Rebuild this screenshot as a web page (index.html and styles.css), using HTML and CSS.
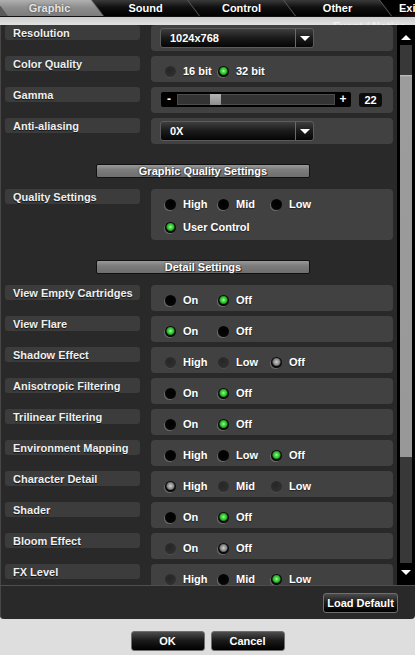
FILE: index.html
```html
<!DOCTYPE html>
<html lang="en">
<head>
    <meta charset="UTF-8">
    <meta name="viewport" content="width=device-width, initial-scale=1.0">
    <title>Options - Graphic</title>
    <link rel="stylesheet" href="styles.css">
</head>
<body>
    <div id="tabs">
        <div class="tab active">Graphic</div>
        <div class="tab">Sound</div>
        <div class="tab">Control</div>
        <div class="tab">Other</div>
        <div class="tab exit">Exit</div>
    </div>
    <div id="strip"><span>Event / Notice</span></div>

    <div id="panel">
        <div id="scroll-area">
            <div id="rows">
                <div class="row">
                    <div class="label">Resolution</div>
                    <div class="value">
                        <div class="dropdown"><span>1024x768</span><div class="drop-btn"><i></i></div></div>
                    </div>
                </div>
                <div class="row">
                    <div class="label">Color Quality</div>
                    <div class="value">
                        <div class="opts">
                            <div class="opt"><span class="radio dim"></span>16 bit</div>
                            <div class="opt"><span class="radio on"></span>32 bit</div>
                        </div>
                    </div>
                </div>
                <div class="row">
                    <div class="label">Gamma</div>
                    <div class="value">
                        <div class="slider">
                            <div class="slider-bar">
                                <span class="sign">-</span>
                                <div class="track"><div class="thumb"></div></div>
                                <span class="sign">+</span>
                            </div>
                            <div class="slider-num">22</div>
                        </div>
                    </div>
                </div>
                <div class="row">
                    <div class="label">Anti-aliasing</div>
                    <div class="value">
                        <div class="dropdown"><span>0X</span><div class="drop-btn"><i></i></div></div>
                    </div>
                </div>

                <div class="section">Graphic Quality Settings</div>

                <div class="row">
                    <div class="label">Quality Settings</div>
                    <div class="value tall">
                        <div class="opts">
                            <div class="opt"><span class="radio"></span>High</div>
                            <div class="opt"><span class="radio"></span>Mid</div>
                            <div class="opt"><span class="radio"></span>Low</div>
                        </div>
                        <div class="opts">
                            <div class="opt wide"><span class="radio on"></span>User Control</div>
                        </div>
                    </div>
                </div>

                <div class="section">Detail Settings</div>

                <div class="row">
                    <div class="label">View Empty Cartridges</div>
                    <div class="value">
                        <div class="opts">
                            <div class="opt"><span class="radio"></span>On</div>
                            <div class="opt"><span class="radio on"></span>Off</div>
                        </div>
                    </div>
                </div>
                <div class="row">
                    <div class="label">View Flare</div>
                    <div class="value">
                        <div class="opts">
                            <div class="opt"><span class="radio on"></span>On</div>
                            <div class="opt"><span class="radio"></span>Off</div>
                        </div>
                    </div>
                </div>
                <div class="row">
                    <div class="label">Shadow Effect</div>
                    <div class="value">
                        <div class="opts">
                            <div class="opt"><span class="radio dim"></span>High</div>
                            <div class="opt"><span class="radio dim"></span>Low</div>
                            <div class="opt"><span class="radio grey"></span>Off</div>
                        </div>
                    </div>
                </div>
                <div class="row">
                    <div class="label">Anisotropic Filtering</div>
                    <div class="value">
                        <div class="opts">
                            <div class="opt"><span class="radio"></span>On</div>
                            <div class="opt"><span class="radio on"></span>Off</div>
                        </div>
                    </div>
                </div>
                <div class="row">
                    <div class="label">Trilinear Filtering</div>
                    <div class="value">
                        <div class="opts">
                            <div class="opt"><span class="radio"></span>On</div>
                            <div class="opt"><span class="radio on"></span>Off</div>
                        </div>
                    </div>
                </div>
                <div class="row">
                    <div class="label">Environment Mapping</div>
                    <div class="value">
                        <div class="opts">
                            <div class="opt"><span class="radio"></span>High</div>
                            <div class="opt"><span class="radio"></span>Low</div>
                            <div class="opt"><span class="radio on"></span>Off</div>
                        </div>
                    </div>
                </div>
                <div class="row">
                    <div class="label">Character Detail</div>
                    <div class="value">
                        <div class="opts">
                            <div class="opt"><span class="radio grey"></span>High</div>
                            <div class="opt"><span class="radio dim"></span>Mid</div>
                            <div class="opt"><span class="radio dim"></span>Low</div>
                        </div>
                    </div>
                </div>
                <div class="row">
                    <div class="label">Shader</div>
                    <div class="value">
                        <div class="opts">
                            <div class="opt"><span class="radio"></span>On</div>
                            <div class="opt"><span class="radio on"></span>Off</div>
                        </div>
                    </div>
                </div>
                <div class="row">
                    <div class="label">Bloom Effect</div>
                    <div class="value">
                        <div class="opts">
                            <div class="opt"><span class="radio dim"></span>On</div>
                            <div class="opt"><span class="radio grey"></span>Off</div>
                        </div>
                    </div>
                </div>
                <div class="row">
                    <div class="label">FX Level</div>
                    <div class="value">
                        <div class="opts">
                            <div class="opt"><span class="radio dim"></span>High</div>
                            <div class="opt"><span class="radio"></span>Mid</div>
                            <div class="opt"><span class="radio on"></span>Low</div>
                        </div>
                    </div>
                </div>
            </div>

            <div id="scrollbar">
                <div class="sb-up"><i></i></div>
                <div class="sb-track"><div class="sb-thumb"></div></div>
                <div class="sb-down"><i></i></div>
            </div>
        </div>

        <div id="panel-bottom">
            <button class="btn" id="btn_loadDefault">Load Default</button>
        </div>
    </div>

    <div id="footer">
        <button class="btn" id="btn_ok">OK</button>
        <button class="btn" id="btn_cancel">Cancel</button>
    </div>
</body>
</html>
```

FILE: styles.css
```css
body {
    margin: 0;
    padding: 0;
    width: 415px;
    height: 655px;
    overflow: hidden;
    background-color: #dedede;
    font-family: "Liberation Sans", Arial, sans-serif;
    font-size: 11px;
    font-weight: bold;
    color: #fff;
}

/* ---- tab bar ---- */

#tabs {
    display: flex;
    height: 16px;
    background-color: #5a5a5a;
    border-bottom: 1px solid #111;
    overflow: hidden;
}

.tab {
    flex: none;
    width: 107px;
    height: 16px;
    margin-right: -11px;
    line-height: 16px;
    text-align: center;
    clip-path: polygon(0 0, 95px 0, 107px 100%, 12px 100%);
    background: linear-gradient(to bottom, #3a3a3a 0, #101010 45%, #000 100%);
    text-shadow: 0 1px 1px #000;
}

.tab:first-child {
    margin-left: -4px;
}

.tab.active {
    background: linear-gradient(to bottom, #b0b0b0 0, #8c8c8c 50%, #7c7c7c 100%);
    color: #e4e4e4;
    text-shadow: 0 0 2px #444;
}

.tab.exit {
    text-align: left;
    padding-left: 19px;
    box-sizing: border-box;
    background: linear-gradient(160deg, #000 35%, #6a0808 70%, #c01818 100%);
}

#strip {
    height: 8px;
    overflow: hidden;
    background: linear-gradient(to bottom, #cdcdcd, #e2e2e2);
    padding-left: 333px;
    line-height: 18px;
    color: #f0f0f0;
}

/* ---- main panel ---- */

#panel {
    height: 594px;
    background-color: #292929;
    border-bottom-left-radius: 4px;
    border-bottom-right-radius: 4px;
    box-shadow: inset 1px 0 0 #474747;
}

#scroll-area {
    display: flex;
    height: 560px;
    overflow: hidden;
}

#rows {
    display: flex;
    flex-direction: column;
    flex: none;
    width: 397px;
    overflow: hidden;
}

.row {
    display: flex;
    flex: none;
    align-items: flex-start;
    margin-bottom: 5px;
}

.label {
    flex: none;
    width: 127px;
    height: 14px;
    margin-left: 5px;
    margin-right: 11px;
    padding-left: 8px;
    padding-top: 1px;
    line-height: 15px;
    background-color: #3c3c3c;
    border-radius: 3px;
    color: #efefef;
    text-shadow: 0 1px 1px #111;
    white-space: nowrap;
    overflow: hidden;
}

.value {
    flex: none;
    box-sizing: border-box;
    width: 242px;
    height: 26px;
    padding-left: 14px;
    padding-top: 4px;
    background-color: #414141;
    border-radius: 4px;
}

.value.tall {
    height: 51px;
}

.value .opts + .opts {
    margin-top: 1px;
}

.opts {
    display: flex;
    align-items: center;
    height: 22px;
}

.opt {
    display: flex;
    align-items: center;
    gap: 7px;
    flex: none;
    width: 53px;
    white-space: nowrap;
    text-shadow: 0 1px 1px #222;
}

.opt.wide {
    width: 120px;
}

/* ---- radio buttons ---- */

.radio {
    flex: none;
    width: 11px;
    height: 11px;
    border-radius: 50%;
    background: radial-gradient(circle at 55% 40%, #000 0, #050505 60%, #1c1c1c 100%);
    box-shadow: -1px 1px 0 #686868;
}

.radio.dim {
    background: radial-gradient(circle at 40% 35%, #262626 0, #2e2e2e 60%, #363636 100%);
    box-shadow: 0 1px 0 #4d4d4d;
}

.radio.on {
    background: radial-gradient(circle at 50% 45%, #b6ffb0 0, #4ee04a 1.5px, #2fbf2d 3px, #1d7a1c 3.8px, #0a0a0a 4.5px);
    box-shadow: -1px 1px 0 #686868;
}

.radio.grey {
    background: radial-gradient(circle at 50% 45%, #d8d8d8 0, #a8a8a8 1.5px, #8a8a8a 3px, #555 3.8px, #0a0a0a 4.5px);
    box-shadow: -1px 1px 0 #686868;
}

/* ---- dropdowns ---- */

.dropdown {
    display: flex;
    align-items: center;
    box-sizing: border-box;
    width: 154px;
    height: 20px;
    margin-left: -5px;
    margin-top: -1px;
    border: 1px solid #5c5c5c;
    border-radius: 3px;
    background: linear-gradient(to bottom, #3e3e3e 0, #1a1a1a 50%, #050505 100%);
}

.dropdown span {
    flex: 1;
    padding-left: 9px;
}

.drop-btn {
    display: flex;
    align-items: center;
    justify-content: center;
    width: 17px;
    height: 18px;
    border-left: 1px solid #6a6a6a;
}

.drop-btn i {
    width: 0;
    height: 0;
    border-left: 5px solid transparent;
    border-right: 5px solid transparent;
    border-top: 5px solid #fff;
}

/* ---- gamma slider ---- */

.slider {
    display: flex;
    align-items: center;
    gap: 8px;
    margin-left: -4px;
    margin-top: 1px;
}

.slider-bar {
    display: flex;
    align-items: center;
    width: 190px;
    height: 15px;
    background-color: #000;
    border-radius: 2px;
}

.sign {
    width: 16px;
    text-align: center;
    font-size: 12px;
    line-height: 15px;
}

.track {
    display: flex;
    align-items: center;
    box-sizing: border-box;
    width: 158px;
    height: 11px;
    background-color: #333;
    border: 1px solid #4c4c4c;
}

.thumb {
    width: 11px;
    height: 11px;
    margin-left: 32px;
    background: linear-gradient(to bottom, #b4b4b4, #8e8e8e);
}

.slider-num {
    width: 23px;
    height: 14px;
    line-height: 14px;
    text-align: center;
    background-color: #0c0c0c;
    border-radius: 3px;
}

/* ---- section headers ---- */

.section {
    flex: none;
    box-sizing: border-box;
    width: 214px;
    height: 14px;
    margin: 15px 0 11px 96px;
    line-height: 12px;
    text-align: center;
    background: linear-gradient(to bottom, #999 0, #7c7c7c 40%, #6e6e6e 100%);
    border: 1px solid #111;
    border-radius: 2px;
    text-shadow: 0 0 2px #222, 1px 1px 0 #333;
}

/* ---- scrollbar ---- */

#scrollbar {
    flex: none;
    width: 18px;
    background-color: #000;
}

.sb-up {
    display: flex;
    justify-content: center;
    height: 20px;
    padding-top: 10px;
    box-sizing: border-box;
}

.sb-up i {
    width: 0;
    height: 0;
    border-left: 5px solid transparent;
    border-right: 5px solid transparent;
    border-bottom: 5px solid #fff;
}

.sb-track {
    height: 518px;
    margin: 0 3px 0 3px;
    background-color: #383838;
    overflow: hidden;
}

.sb-thumb {
    height: 382px;
    margin-top: 30px;
    background: linear-gradient(to bottom, #c4c4c4 0, #9c9c9c 2px, #989898 100%);
}

.sb-down {
    display: flex;
    justify-content: center;
    height: 22px;
    padding-top: 7px;
    box-sizing: border-box;
}

.sb-down i {
    width: 0;
    height: 0;
    border-left: 5px solid transparent;
    border-right: 5px solid transparent;
    border-top: 5px solid #fff;
}

/* ---- buttons ---- */

.btn {
    box-sizing: border-box;
    height: 20px;
    padding: 0;
    font-family: "Liberation Sans", Arial, sans-serif;
    font-size: 11px;
    font-weight: bold;
    color: #fff;
    background: linear-gradient(to bottom, #4c4c4c 0, #1c1c1c 45%, #000 100%);
    border: 1px solid #6e6e6e;
    border-radius: 3px;
    cursor: pointer;
}

#panel-bottom {
    display: flex;
    justify-content: flex-end;
    height: 34px;
    box-sizing: border-box;
    padding: 7px 17px 0 0;
    border-top: 1px solid #4e4e4e;
}

#btn_loadDefault {
    width: 75px;
}

#footer {
    display: flex;
    justify-content: center;
    gap: 6px;
    padding-top: 12px;
}

#btn_ok,
#btn_cancel {
    width: 74px;
}
```
